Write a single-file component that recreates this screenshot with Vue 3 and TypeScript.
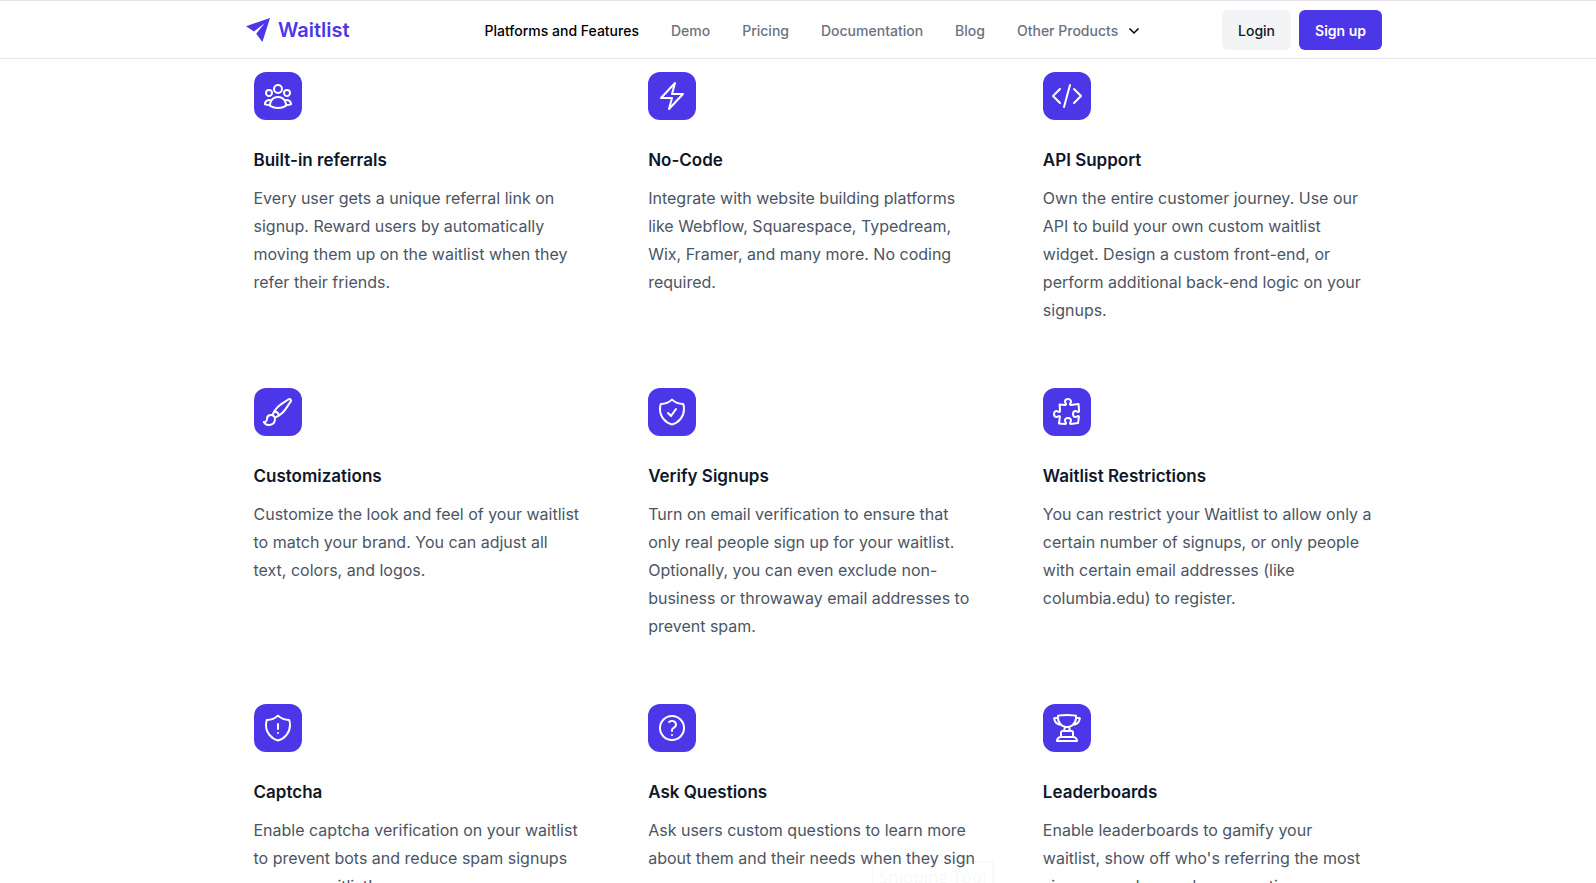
<script setup lang="ts">
interface NavItem {
  label: string
  active?: boolean
}

interface Feature {
  title: string
  text: string
  icon: string
}

const navItems: NavItem[] = [
  { label: 'Platforms and Features', active: true },
  { label: 'Demo' },
  { label: 'Pricing' },
  { label: 'Documentation' },
  { label: 'Blog' },
]

const features: Feature[] = [
  {
    title: 'Built-in referrals',
    text: 'Every user gets a unique referral link on signup. Reward users by automatically moving them up on the waitlist when they refer their friends.',
    icon: 'M18 18.72a9.094 9.094 0 003.741-.479 3 3 0 00-4.682-2.72m.94 3.198l.001.031c0 .225-.012.447-.037.666A11.944 11.944 0 0112 21c-2.17 0-4.207-.576-5.963-1.584A6.062 6.062 0 016 18.719m12 0a5.971 5.971 0 00-.941-3.197m0 0A5.995 5.995 0 0012 12.75a5.995 5.995 0 00-5.058 2.772m0 0a3 3 0 00-4.681 2.72 8.986 8.986 0 003.74.477m.94-3.197a5.971 5.971 0 00-.94 3.197M15 6.75a3 3 0 11-6 0 3 3 0 016 0zm6 3a2.25 2.25 0 11-4.5 0 2.25 2.25 0 014.5 0zm-13.5 0a2.25 2.25 0 11-4.5 0 2.25 2.25 0 014.5 0z',
  },
  {
    title: 'No-Code',
    text: 'Integrate with website building platforms like Webflow, Squarespace, Typedream, Wix, Framer, and many more. No coding required.',
    icon: 'M3.75 13.5l10.5-11.25L12 10.5h8.25L9.75 21.75 12 13.5H3.75z',
  },
  {
    title: 'API Support',
    text: 'Own the entire customer journey. Use our API to build your own custom waitlist widget. Design a custom front-end, or perform additional back-end logic on your signups.',
    icon: 'M17.25 6.75L22.5 12l-5.25 5.25m-10.5 0L1.5 12l5.25-5.25m7.5-3l-4.5 16.5',
  },
  {
    title: 'Customizations',
    text: 'Customize the look and feel of your waitlist to match your brand. You can adjust all text, colors, and logos.',
    icon: 'M9.53 16.122a3 3 0 00-5.78 1.128 2.25 2.25 0 01-2.4 2.245 4.5 4.5 0 008.4-2.245c0-.399-.078-.78-.22-1.128zm0 0a15.998 15.998 0 003.388-1.62m-5.043-.025a15.994 15.994 0 011.622-3.395m3.42 3.42a15.995 15.995 0 004.764-4.648l3.876-5.814a1.151 1.151 0 00-1.597-1.597L14.146 6.32a15.996 15.996 0 00-4.649 4.763m3.42 3.42a6.776 6.776 0 00-3.42-3.42',
  },
  {
    title: 'Verify Signups',
    text: 'Turn on email verification to ensure that only real people sign up for your waitlist. Optionally, you can even exclude non-business or throwaway email addresses to prevent spam.',
    icon: 'M9 12.75L11.25 15 15 9.75m-3-7.036A11.959 11.959 0 013.598 6 11.99 11.99 0 003 9.749c0 5.592 3.824 10.29 9 11.623 5.176-1.332 9-6.03 9-11.622 0-1.31-.21-2.571-.598-3.751h-.152c-3.196 0-6.1-1.248-8.25-3.285z',
  },
  {
    title: 'Waitlist Restrictions',
    text: 'You can restrict your Waitlist to allow only a certain number of signups, or only people with certain email addresses (like columbia.edu) to register.',
    icon: 'M14.25 6.087c0-.355.186-.676.401-.959.221-.29.349-.634.349-1.003 0-1.036-1.007-1.875-2.25-1.875s-2.25.84-2.25 1.875c0 .369.128.713.349 1.003.215.283.401.604.401.959v0a.64.64 0 01-.657.643 48.39 48.39 0 01-4.163-.3c.186 1.613.293 3.25.315 4.907a.656.656 0 01-.658.663v0c-.355 0-.676-.186-.959-.401a1.647 1.647 0 00-1.003-.349c-1.036 0-1.875 1.007-1.875 2.25s.84 2.25 1.875 2.25c.369 0 .713-.128 1.003-.349.283-.215.604-.401.959-.401v0c.31 0 .555.26.532.57a48.039 48.039 0 01-.642 5.056c1.518.19 3.058.309 4.616.354a.64.64 0 00.657-.643v0c0-.355-.186-.676-.401-.959a1.647 1.647 0 01-.349-1.003c0-1.035 1.008-1.875 2.25-1.875 1.243 0 2.25.84 2.25 1.875 0 .369-.128.713-.349 1.003-.215.283-.4.604-.4.959v0c0 .333.277.599.61.58a48.1 48.1 0 005.427-.63 48.05 48.05 0 00.582-4.717.532.532 0 00-.533-.57v0c-.355 0-.676.186-.959.401-.29.221-.634.349-1.003.349-1.035 0-1.875-1.007-1.875-2.25s.84-2.25 1.875-2.25c.37 0 .713.128 1.003.349.283.215.604.401.96.401v0a.656.656 0 00.658-.663 48.422 48.422 0 00-.37-5.36c-1.886.342-3.81.574-5.766.689a.578.578 0 01-.61-.58v0z',
  },
  {
    title: 'Captcha',
    text: 'Enable captcha verification on your waitlist to prevent bots and reduce spam signups on your waitlist!',
    icon: 'M12 9v3.75m0-10.036A11.959 11.959 0 013.598 6 11.99 11.99 0 003 9.75c0 5.592 3.824 10.29 9 11.622 5.176-1.332 9-6.03 9-11.622 0-1.31-.21-2.571-.598-3.751h-.152c-3.196 0-6.1-1.248-8.25-3.286zm0 13.036h.008v.008H12v-.008z',
  },
  {
    title: 'Ask Questions',
    text: 'Ask users custom questions to learn more about them and their needs when they sign up.',
    icon: 'M9.879 7.519c1.171-1.025 3.071-1.025 4.242 0 1.172 1.025 1.172 2.687 0 3.712-.203.179-.43.326-.67.442-.745.361-1.45.999-1.45 1.827v.75M21 12a9 9 0 11-18 0 9 9 0 0118 0zm-9 5.25h.008v.008H12v-.008z',
  },
  {
    title: 'Leaderboards',
    text: "Enable leaderboards to gamify your waitlist, show off who's referring the most signups, and reward super-active users.",
    icon: 'M16.5 18.75h-9m9 0a3 3 0 013 3h-15a3 3 0 013-3m9 0v-3.375c0-.621-.503-1.125-1.125-1.125h-.871M7.5 18.75v-3.375c0-.621.504-1.125 1.125-1.125h.872m5.007 0H9.497m5.007 0a7.454 7.454 0 01-.982-3.172M9.497 14.25a7.454 7.454 0 00.981-3.172M5.25 4.236c-.982.143-1.954.317-2.916.52A6.003 6.003 0 007.73 9.728M5.25 4.236V4.5c0 2.108.966 3.99 2.48 5.228M5.25 4.236V2.721C7.456 2.41 9.71 2.25 12 2.25c2.291 0 4.545.16 6.75.47v1.516M7.73 9.728a6.726 6.726 0 002.748 1.35m8.272-6.842V4.5c0 2.108-.966 3.99-2.48 5.228m2.48-5.492a46.32 46.32 0 012.916.52 6.003 6.003 0 01-5.395 4.972m0 0a6.726 6.726 0 01-2.749 1.35m0 0a6.772 6.772 0 01-3.044 0',
  },
]
</script>

<template>
  <div class="page">
    <header class="header">
      <div class="header-inner">
        <a class="brand" href="#">
          <svg class="brand-mark" viewBox="0 0 24 24" aria-hidden="true">
            <path d="M24 0 0 8.2 8 13.6 18.6 5.2 10.2 15.8 16.4 24Z" />
          </svg>
          <span>Waitlist</span>
        </a>
        <nav class="nav">
          <a
            v-for="item in navItems"
            :key="item.label"
            href="#"
            class="nav-link"
            :class="{ active: item.active }"
          >{{ item.label }}</a>
          <button type="button" class="nav-link nav-menu">
            <span>Other Products</span>
            <svg class="chevron" viewBox="0 0 12 12" aria-hidden="true">
              <path d="M1.5 3.5 6 8l4.5-4.5" />
            </svg>
          </button>
        </nav>
        <div class="actions">
          <button type="button" class="btn login">Login</button>
          <button type="button" class="btn signup">Sign up</button>
        </div>
      </div>
    </header>

    <main class="features">
      <article v-for="feature in features" :key="feature.title" class="feature">
        <div class="tile">
          <svg viewBox="0 0 24 24" aria-hidden="true">
            <path :d="feature.icon" />
          </svg>
        </div>
        <h3>{{ feature.title }}</h3>
        <p>{{ feature.text }}</p>
      </article>
    </main>

    <div class="tooltip">Snipping Tool</div>
  </div>
</template>

<style>
body {
  margin: 0;
  background: #fff;
}
</style>

<style scoped>
.page {
  position: relative;
  height: 100vh;
  overflow: hidden;
  font-family: Inter, "Liberation Sans", sans-serif;
  color: #0f172a;
}

.header {
  box-sizing: border-box;
  height: 59px;
  padding: 0 24px 0 56px;
  border-top: 1px solid #e8e0ec;
  border-bottom: 1px solid #e5e7eb;
  background: #fff;
}

.header-inner {
  display: flex;
  align-items: center;
  height: 100%;
  max-width: 1136px;
  margin: 0 auto;
}

.brand {
  display: flex;
  align-items: center;
  gap: 8px;
  color: #4b37e8;
  font-size: 20px;
  font-weight: 600;
  line-height: 28px;
  text-decoration: none;
}

.brand-mark {
  width: 24px;
  height: 24px;
  fill: currentColor;
}

.nav {
  display: flex;
  align-items: center;
  gap: 32px;
  margin: 0 auto;
  padding: 2px 0 0 53px;
}

.nav-link {
  color: #6b7280;
  font-size: 14px;
  font-weight: 500;
  line-height: 20px;
  text-decoration: none;
  white-space: nowrap;
}

.active {
  color: #000;
}

.nav-menu {
  display: flex;
  align-items: center;
  gap: 10px;
  padding: 0;
  border: 0;
  background: none;
  font-family: inherit;
}

.chevron {
  width: 12px;
  height: 12px;
  fill: none;
  stroke: #000;
  stroke-width: 1.5;
}

.actions {
  display: flex;
  gap: 8px;
}

.btn {
  height: 40px;
  padding: 2px 16px 0;
  border: 0;
  border-radius: 6px;
  font-family: inherit;
  font-size: 14px;
  line-height: 20px;
}

.login {
  background: #f3f4f6;
  color: #111827;
  font-weight: 500;
}

.signup {
  background: #4b37e8;
  color: #fff;
  font-weight: 600;
}

.features {
  display: grid;
  grid-template-columns: repeat(3, minmax(0, 1fr));
  gap: 64px;
  max-width: 1120px;
  margin: 0 auto;
  padding: 13px 24px 64px 55px;
}

.tile {
  display: flex;
  align-items: center;
  justify-content: center;
  width: 48px;
  height: 48px;
  border-radius: 12px;
  background: #4b37e8;
}

.tile svg {
  width: 32px;
  height: 32px;
  fill: none;
  stroke: #fff;
  stroke-width: 1.5;
  stroke-linecap: round;
  stroke-linejoin: round;
}

.feature h3 {
  margin: 24px 0 8px;
  font-size: 17px;
  font-weight: 600;
  line-height: 32px;
}

.feature p {
  margin: 0;
  color: #4b5563;
  font-size: 16px;
  line-height: 28px;
}

/* Fading hover label, half off the bottom edge */
.tooltip {
  position: absolute;
  left: 872px;
  bottom: -10px;
  padding: 0 6px;
  border: 1px solid rgba(0, 0, 0, 0.03);
  color: rgba(0, 0, 0, 0.05);
  box-shadow: 3px 3px 2px rgba(0, 0, 0, 0.02);
  font-family: "Open Sans", "Noto Sans", sans-serif;
  font-size: 17px;
  line-height: 30px;
  white-space: nowrap;
}
</style>
